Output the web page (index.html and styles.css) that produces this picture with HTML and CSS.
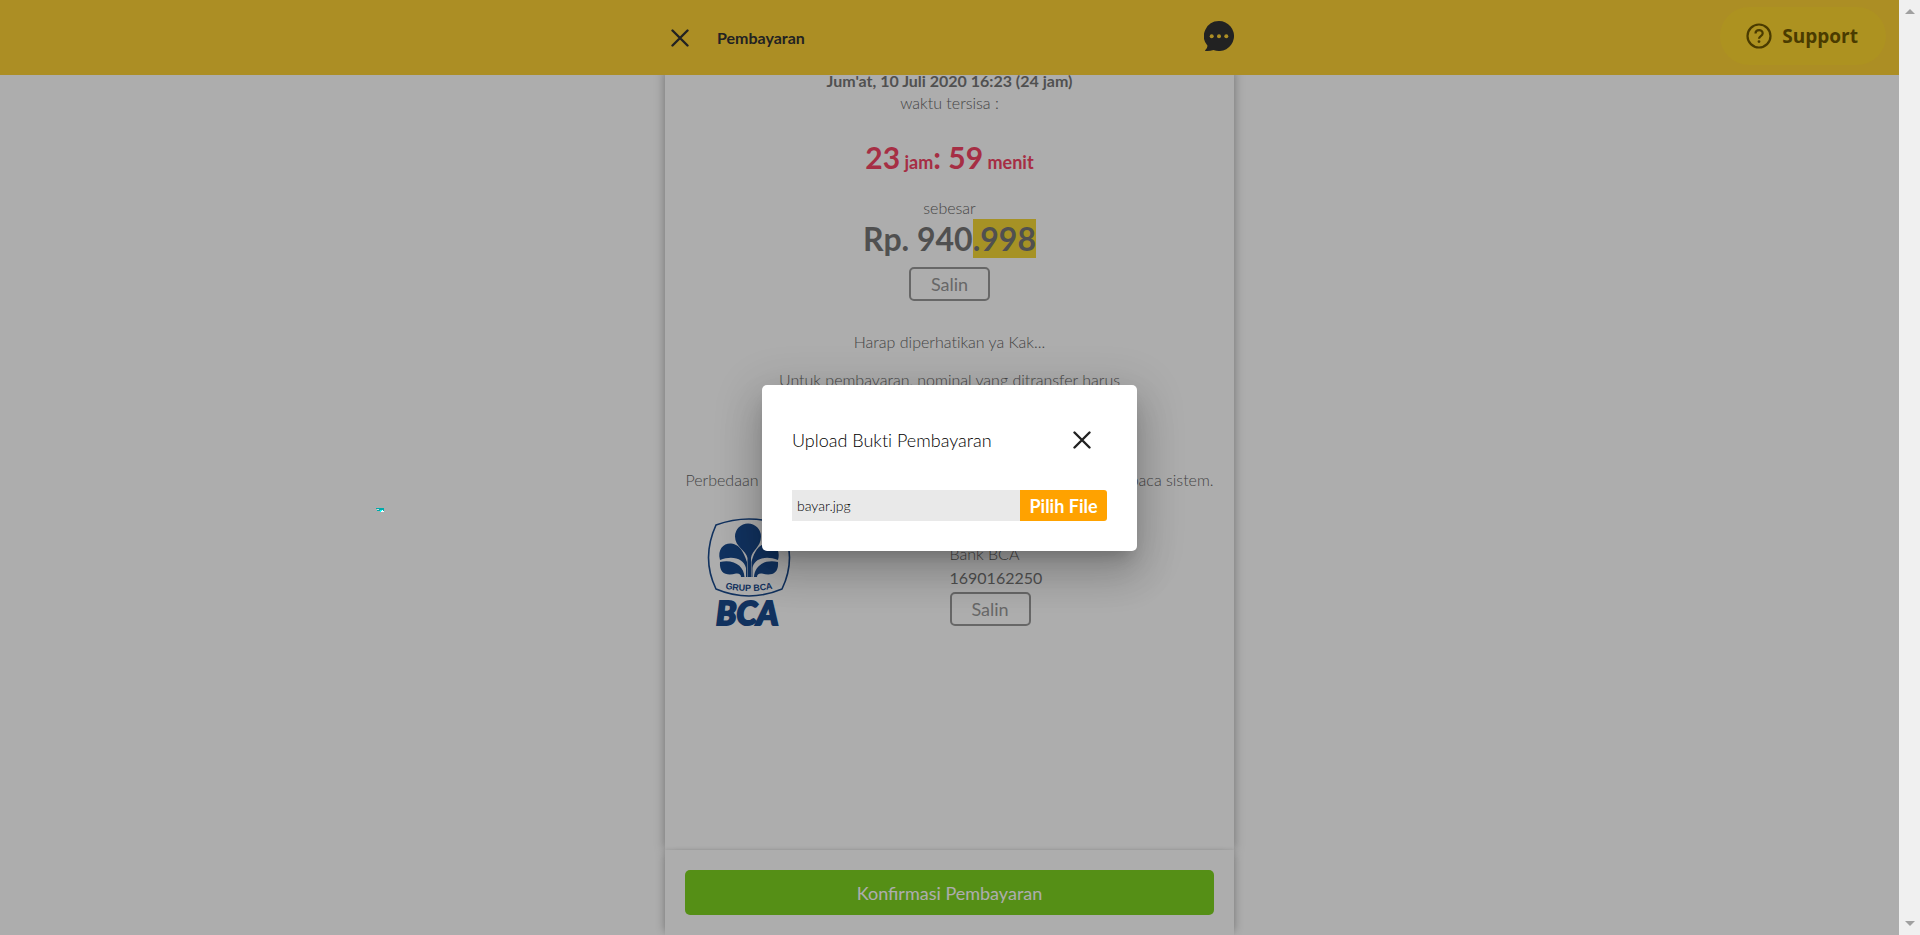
FILE: index.html
```
<!DOCTYPE html>
<html lang="id">
<head>
<meta charset="utf-8">
<title>Pembayaran</title>
<link rel="stylesheet" href="styles.css">
</head>
<body>
<div class="viewport">
  <div class="page">
    <header class="topbar">
      <div class="topbar-inner">
        <button class="icon-btn" type="button" aria-label="Tutup">
          <svg width="18" height="18" viewBox="0 0 18 18"><path d="M1.500 1.500l15 15M16.500 1.500l-15 15" stroke="#333" stroke-width="2.400" fill="none" stroke-linecap="round"/></svg>
        </button>
        <h1 class="topbar-title">Pembayaran</h1>
        <button class="icon-btn chat-btn" type="button" aria-label="Chat">
          <svg width="30" height="30" viewBox="0 0 30 30"><path d="M15 0a15 15 0 1 1-5.500 28.950Q5 30.300.8 29.700Q3.500 27.500 3.500 24.700A15 15 0 0 1 15 0z" fill="#333"/><circle cx="7.700" cy="15.300" r="2" fill="#fed136"/><circle cx="15" cy="15.300" r="2" fill="#fed136"/><circle cx="22.300" cy="15.300" r="2" fill="#fed136"/></svg>
        </button>
      </div>
      <button class="support" type="button">
        <svg width="26" height="26" viewBox="0 0 26 26" fill="none" stroke="#6d5700"><circle cx="13" cy="13" r="11.500" stroke-width="2.200"/><path d="M9.500 10.600c0-4.700 7.200-4.500 7.200-.4 0 2.900-3.700 2.800-3.700 5.500" stroke-width="2.200"/><circle cx="13" cy="18.600" r=".7" stroke-width="1.500"/></svg>
        Support
      </button>
    </header>
    <main class="sheet">
      <p class="deadline">Jum'at, 10 Juli 2020 16:23 (24 jam)</p>
      <p class="light">waktu tersisa :</p>
      <p class="timer">23<small> jam</small>: 59<small> menit</small></p>
      <p class="light">sebesar</p>
      <p class="amount">Rp. 940<mark>.998</mark></p>
      <button class="copy" type="button">Salin</button>
      <div class="notes">
        <p>Harap diperhatikan ya Kak...</p>
        <p class="note-rule">Untuk pembayaran, nominal yang ditransfer harus</p>
        <p>Perbedaan nominal transfer akan membuat pembayaran tidak terbaca sistem.</p>
      </div>
      <section class="bank">
        <div class="bank-logo">
          <svg width="84" height="112" viewBox="0 0 84 112" role="img" aria-label="BCA">
            <path d="M9 9Q42-3 75 9Q90 42 75 73Q42 87 9 73Q-6 42 9 9z" fill="none" stroke="#1a4a8c" stroke-width="1.600"/>
            <g fill="#1a4a8c">
              <path d="M40.500 61V42C39 34 28 31 28 20.500a13 13 0 0 1 26 0C54 31 45 34 44 42V61z"/>
              <path d="M39 61V52C37 43 26 39 13 44C10 33 17 27 24 27.500C34 28 38 40 40 46V61z"/>
              <path d="M45.500 61V52C47 43 58 39 71 44C74 33 67 27 60 27.500C50 28 46 40 44.500 46V61z"/>
              <path d="M37.500 61C37 51 28 43 13 46C12 58 20 60 29 57.500Q34 57 34 61z"/>
              <path d="M47 61C47.500 51 56 43 71 46C72 58 64 60 55 57.500Q50 57 50 61z"/>
            </g>
            <path id="seal-arc" d="M10 71Q42 79 74 71" fill="none"/>
            <text class="seal-text" text-anchor="middle"><textPath href="#seal-arc" startOffset="50%">GRUP BCA</textPath></text>
            <text class="logo-text" x="9" y="109">BCA</text>
          </svg>
        </div>
        <div class="bank-info">
          <p class="light">Bank BCA</p>
          <p>1690162250</p>
          <button class="copy" type="button">Salin</button>
        </div>
      </section>
    </main>
    <footer class="confirm-bar">
      <button class="confirm" type="button">Konfirmasi Pembayaran</button>
    </footer>
    <div class="backdrop">
      <div class="dialog" role="dialog" aria-labelledby="dialog-title">
        <div class="dialog-head">
          <h2 id="dialog-title">Upload Bukti Pembayaran</h2>
          <button class="icon-btn" type="button" aria-label="Tutup dialog">
            <svg width="18" height="18" viewBox="0 0 18 18"><path d="M1.500 1.500l15 15M16.500 1.500l-15 15" stroke="#222" stroke-width="2.400" fill="none" stroke-linecap="round"/></svg>
          </button>
        </div>
        <div class="picker">
          <input class="picker-name" type="text" value="bayar.jpg" aria-label="Nama file" readonly>
          <button class="picker-btn" type="button">Pilih File</button>
        </div>
      </div>
    </div>
    <svg class="speck" width="8" height="4" viewBox="0 0 8 4" aria-hidden="true"><path d="M0 0h8v4H5V3H1V1H0z" fill="#0aa"/><path d="M1 1h2v1H1z" fill="#cdd"/><path d="M4 2h2v2H4z" fill="#0ff"/><path d="M6 2h1v1h1v1H5V3h1z" fill="#fff"/></svg>
  </div>
  <div class="scrollbar" aria-hidden="true">
    <svg width="10" height="5" viewBox="0 0 10 5"><path d="M0 5l5-5 5 5z" fill="#a0a0a0"/></svg>
    <svg width="10" height="5" viewBox="0 0 10 5"><path d="M0 0l5 5 5-5z" fill="#a0a0a0"/></svg>
  </div>
</div>
</body>
</html>
```
FILE: styles.css
```
* { box-sizing: border-box; }
body { margin: 0; font: 16px/22px Lato, "Open Sans", sans-serif; color: #777; }
h1, h2, p { margin: 0; }
button, input { font: inherit; color: inherit; border: 0; padding: 0; background: none; }
button { cursor: pointer; }

.viewport { display: flex; height: 100vh; overflow: hidden; }
.page { position: relative; flex: 1; display: flex; flex-direction: column; align-items: center; background: #fff; overflow: hidden; }
.scrollbar { width: 21px; background: #f0f0f0; display: flex; flex-direction: column; align-items: center; justify-content: space-between; padding: 9px 0; }
.scrollbar svg { display: block; }

.topbar { position: relative; z-index: 2; flex: none; width: 100%; height: 75px; background: #fed136; display: flex; justify-content: center; }
.topbar-inner { width: 569px; display: flex; align-items: center; padding: 0 0 0 6px; }
.topbar-title { flex: 1; margin-left: 28px; font-size: 16px; font-weight: 700; color: #333; }
.icon-btn { display: flex; align-items: center; justify-content: center; }
.chat-btn { padding-bottom: 3px; }
.support { position: absolute; right: 13px; top: 7px; height: 58px; padding: 0 28px 0 26px; border-radius: 29px; background: #ffd730; display: flex; align-items: center; gap: 10px; font: 700 19px/24px "Open Sans", sans-serif; color: #6d5700; }

.sheet { flex: 1; width: 569px; padding: 0 20px; background: #fff; box-shadow: 0 0 10px rgba(0, 0, 0, .35); text-align: center; margin-top: -5px; }
.light, .notes { font-weight: 300; }
.notes { color: #666; font-variant-ligatures: none; }
.light { color: #666; }
.deadline { font-weight: 700; }
.timer { margin: 23px 0 15px; font-size: 30px; line-height: 40px; font-weight: 700; color: #f54565; }
.timer small { font-size: 18px; }
.amount { font-size: 32px; line-height: 40px; font-weight: 700; }
.amount mark { background: #f5d837; color: inherit; }
.copy { width: 81px; height: 34px; border: 2px solid #999; border-radius: 5px; font-size: 18px; color: #999; }
.sheet > .copy { margin-top: 8px; }
.notes { margin: 30px -20px 0; }
.notes p + p { margin-top: 16px; }
.notes .note-rule { min-height: 84px; }
.bank { display: grid; grid-template-columns: 1fr 1fr; margin-top: 25px; text-align: left; }
.bank-logo { padding-left: 22px; }
.bank-logo svg { display: block; }
.bank-info { padding-top: 26px; line-height: 24px; }
.bank-info .copy { margin-top: 2px; display: block; }
.seal-text { font: 700 9px "Liberation Sans", sans-serif; fill: #1a4a8c; }
.logo-text { font: italic 900 33px Lato, sans-serif; fill: #1a4a8c; stroke: #1a4a8c; stroke-width: 2; }

.confirm-bar { position: relative; flex: none; width: 569px; height: 85px; padding: 20px; background: #fff; box-shadow: 6px 0 8px -4px rgba(0, 0, 0, .2), -6px 0 8px -4px rgba(0, 0, 0, .2), 0 0 4px rgba(0, 0, 0, .08); }
.confirm { width: 100%; height: 45px; border-radius: 5px; background: #7ed321; color: #fff; font-size: 18px; }

.backdrop { position: absolute; z-index: 5; inset: 0; display: flex; align-items: center; justify-content: center; padding-top: 1px; background: rgba(0, 0, 0, .32); }
.dialog { width: 375px; padding: 30px; border-radius: 5px; background: #fff; color: #222; box-shadow: 0 11px 15px -7px rgba(0, 0, 0, .2), 0 24px 38px 3px rgba(0, 0, 0, .14), 0 9px 46px 8px rgba(0, 0, 0, .12); }
.dialog-head { display: flex; justify-content: space-between; align-items: center; height: 50px; padding-right: 16px; margin-bottom: 25px; }
.dialog-head h2 { font-size: 18px; font-weight: 300; color: #000; font-variant-ligatures: none; }
.picker { display: flex; height: 31px; }
.picker-name { flex: 1; min-width: 0; padding: 0 5px; background: #e9e9e9; font-size: 14px; font-weight: 300; color: #000; }
.picker-btn { width: 87px; border-radius: 0 3px 3px 0; background: #ffa200; color: #fff; font-size: 18px; font-weight: 700; font-variant-ligatures: none; }
.speck { position: absolute; z-index: 6; left: 376px; top: 508px; }
```
